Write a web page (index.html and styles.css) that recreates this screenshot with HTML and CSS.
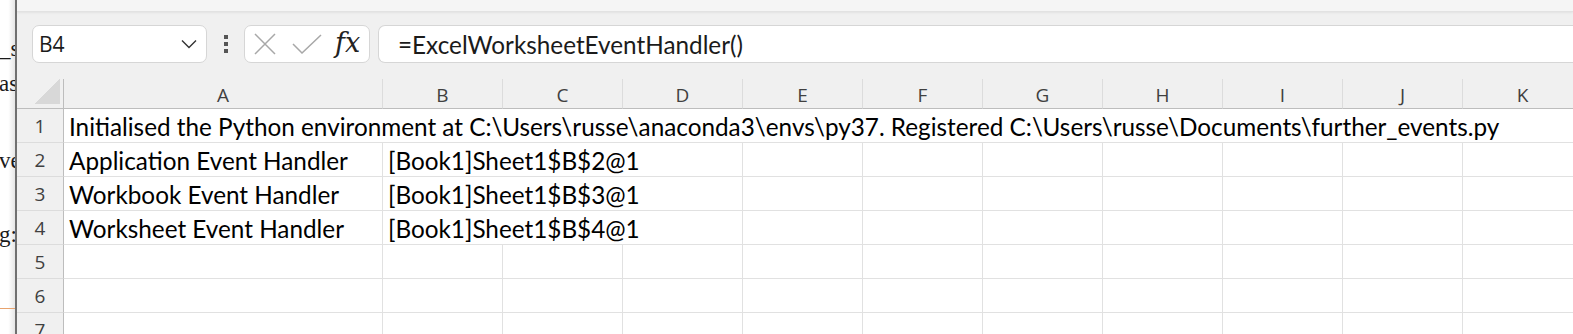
FILE: index.html
```html
<!DOCTYPE html>
<html lang="en">
<head>
    <meta charset="UTF-8">
    <title>Excel - Book1</title>
    <link rel="stylesheet" href="styles.css">
</head>
<body>
    <div class="screen">
        <div class="backdrop">
            <div class="frag frag-1">_s</div>
            <div class="frag frag-2">as</div>
            <div class="frag frag-3">ve</div>
            <div class="frag frag-4">g:</div>
            <div class="frag-rule"></div>
        </div>

        <div class="excel">
            <div class="ribbon-edge"></div>

            <div class="formula-bar">
                <div class="name-box">
                    <span>B4</span>
                    <svg width="16" height="10" viewBox="0 0 16 10"><path d="M1 1.5 L8 8.5 L15 1.5" fill="none" stroke="#333" stroke-width="1.4"/></svg>
                </div>
                <div class="more">
                    <svg width="6" height="20" viewBox="0 0 6 20"><rect x="1" y="1" width="4" height="4" fill="#555"/><rect x="1" y="8" width="4" height="4" fill="#555"/><rect x="1" y="15" width="4" height="4" fill="#555"/></svg>
                </div>
                <div class="fn-buttons">
                    <svg class="ico-cancel" width="24" height="22" viewBox="0 0 24 22"><path d="M2 1 L22 21 M22 1 L2 21" stroke="#a8a8a8" stroke-width="1.5" fill="none"/></svg>
                    <svg class="ico-enter" width="30" height="20" viewBox="0 0 30 20"><path d="M1 10 L10 19 L29 1" stroke="#a8a8a8" stroke-width="1.5" fill="none"/></svg>
                    <span class="fx">fx</span>
                </div>
                <div class="formula-input">=ExcelWorksheetEventHandler()</div>
            </div>

            <div class="sheet">
                <div class="corner"><div class="select-all"></div></div>
                <div class="col-head">A</div>
                <div class="col-head">B</div>
                <div class="col-head">C</div>
                <div class="col-head">D</div>
                <div class="col-head">E</div>
                <div class="col-head">F</div>
                <div class="col-head">G</div>
                <div class="col-head">H</div>
                <div class="col-head">I</div>
                <div class="col-head">J</div>
                <div class="col-head">K</div>

                <div class="row-head">1</div>
                <div class="cell span-all">Initialised the Python environment at C:\Users\russe\anaconda3\envs\py37. Registered C:\Users\russe\Documents\further_events.py</div>

                <div class="row-head">2</div>
                <div class="cell">Application Event Handler</div>
                <div class="cell span-3">[Book1]Sheet1$B$2@1</div>
                <div class="cell"></div><div class="cell"></div><div class="cell"></div><div class="cell"></div><div class="cell"></div><div class="cell"></div><div class="cell"></div>

                <div class="row-head">3</div>
                <div class="cell">Workbook Event Handler</div>
                <div class="cell span-3">[Book1]Sheet1$B$3@1</div>
                <div class="cell"></div><div class="cell"></div><div class="cell"></div><div class="cell"></div><div class="cell"></div><div class="cell"></div><div class="cell"></div>

                <div class="row-head">4</div>
                <div class="cell">Worksheet Event Handler</div>
                <div class="cell span-3">[Book1]Sheet1$B$4@1</div>
                <div class="cell"></div><div class="cell"></div><div class="cell"></div><div class="cell"></div><div class="cell"></div><div class="cell"></div><div class="cell"></div>

                <div class="row-head">5</div>
                <div class="cell"></div><div class="cell"></div><div class="cell"></div><div class="cell"></div><div class="cell"></div><div class="cell"></div><div class="cell"></div><div class="cell"></div><div class="cell"></div><div class="cell"></div><div class="cell"></div>

                <div class="row-head">6</div>
                <div class="cell"></div><div class="cell"></div><div class="cell"></div><div class="cell"></div><div class="cell"></div><div class="cell"></div><div class="cell"></div><div class="cell"></div><div class="cell"></div><div class="cell"></div><div class="cell"></div>

                <div class="row-head">7</div>
                <div class="cell"></div><div class="cell"></div><div class="cell"></div><div class="cell"></div><div class="cell"></div><div class="cell"></div><div class="cell"></div><div class="cell"></div><div class="cell"></div><div class="cell"></div><div class="cell"></div>
            </div>
        </div>
    </div>
</body>
</html>
```

FILE: styles.css
```css
* {
    box-sizing: border-box;
}

body {
    margin: 0;
    width: 1573px;
    height: 334px;
    overflow: hidden;
    background: #fff;
    font-family: "Open Sans", "Noto Sans", sans-serif;
}

.screen {
    display: flex;
    height: 100%;
}

/* window behind excel, only a sliver visible */
.backdrop {
    width: 17px;
    flex-shrink: 0;
    overflow: hidden;
    background: linear-gradient(to right, #fff 55%, #e6e6e6 100%);
    border-right: 2px solid #707070;
    font-family: "Liberation Serif", serif;
    font-size: 23px;
    color: #1a1a1a;
    line-height: 20px;
    white-space: nowrap;
}

.frag {
    height: 20px;
    margin-left: -1px;
}

.frag-1 { margin-top: 39px; }
.frag-2 { margin-top: 15px; }
.frag-3 { margin-top: 57px; }
.frag-4 { margin-top: 54px; }

.frag-rule {
    margin-top: 63px;
    width: 15px;
    height: 1px;
    background: #e8a36e;
}

.excel {
    flex: 1;
    display: flex;
    flex-direction: column;
    background: #f0f0f0;
    overflow: hidden;
}

.ribbon-edge {
    height: 12px;
    flex-shrink: 0;
    background: #f5f5f5;
    border-bottom: 1px solid #e2e2e2;
    box-shadow: 0 1px 2px rgba(0, 0, 0, 0.06);
}

.formula-bar {
    display: flex;
    align-items: center;
    padding: 13px 0 16px 15px;
}

.name-box,
.fn-buttons,
.formula-input {
    height: 38px;
    background: #fff;
    border: 1px solid #d6d6d6;
    border-radius: 7px;
    display: flex;
    align-items: center;
}

.name-box {
    width: 175px;
    justify-content: space-between;
    padding: 0 9px 0 6px;
    font-size: 21px;
    color: #1b1b1b;
}

.more {
    width: 37px;
    display: flex;
    justify-content: center;
}

.fn-buttons {
    width: 126px;
    padding-left: 8px;
}

.ico-cancel {
    margin-right: 15px;
}

.ico-enter {
    margin-right: 13px;
}

.fx {
    font-family: "DejaVu Serif", serif;
    font-style: italic;
    font-size: 27px;
    color: #222;
    margin-top: -4px;
}

.formula-input {
    flex: 1;
    margin-left: 8px;
    border-right: none;
    border-radius: 7px 0 0 7px;
    padding-left: 19px;
    font-family: "Lato", sans-serif;
    font-size: 24.3px;
    color: #1b1b1b;
}

/* grid */
.sheet {
    display: grid;
    grid-template-columns: 47px 319px repeat(10, 120px);
    grid-template-rows: 30px;
    grid-auto-rows: 34px;
    background: #fff;
}

.corner,
.col-head,
.row-head {
    background: #f0f0f0;
    color: #404040;
    font-size: 19px;
}

.corner {
    display: flex;
    align-items: flex-end;
    justify-content: flex-end;
    padding: 0 3px 4px 0;
    border-right: 1px solid #bdbdbd;
    border-bottom: 1px solid #bdbdbd;
}

.select-all {
    width: 26px;
    height: 26px;
    background: linear-gradient(to bottom right, transparent 50%, #d8d8d8 50%);
}

.col-head {
    display: flex;
    align-items: center;
    justify-content: center;
    padding-top: 2px;
    border-right: 1px solid #dcdcdc;
    border-bottom: 1px solid #bdbdbd;
}

.row-head {
    display: flex;
    align-items: flex-end;
    justify-content: center;
    padding-bottom: 3px;
    border-right: 1px solid #bdbdbd;
    border-bottom: 1px solid #dcdcdc;
}

.cell {
    display: flex;
    align-items: flex-end;
    padding: 0 0 1px 5px;
    border-right: 1px solid #e1e1e1;
    border-bottom: 1px solid #e1e1e1;
    font-family: "Lato", sans-serif;
    font-size: 24.3px;
    color: #000;
    white-space: nowrap;
    overflow: hidden;
}

.span-all {
    grid-column: 2 / -1;
    border-right: none;
}

.span-3 {
    grid-column: span 3;
}
```
